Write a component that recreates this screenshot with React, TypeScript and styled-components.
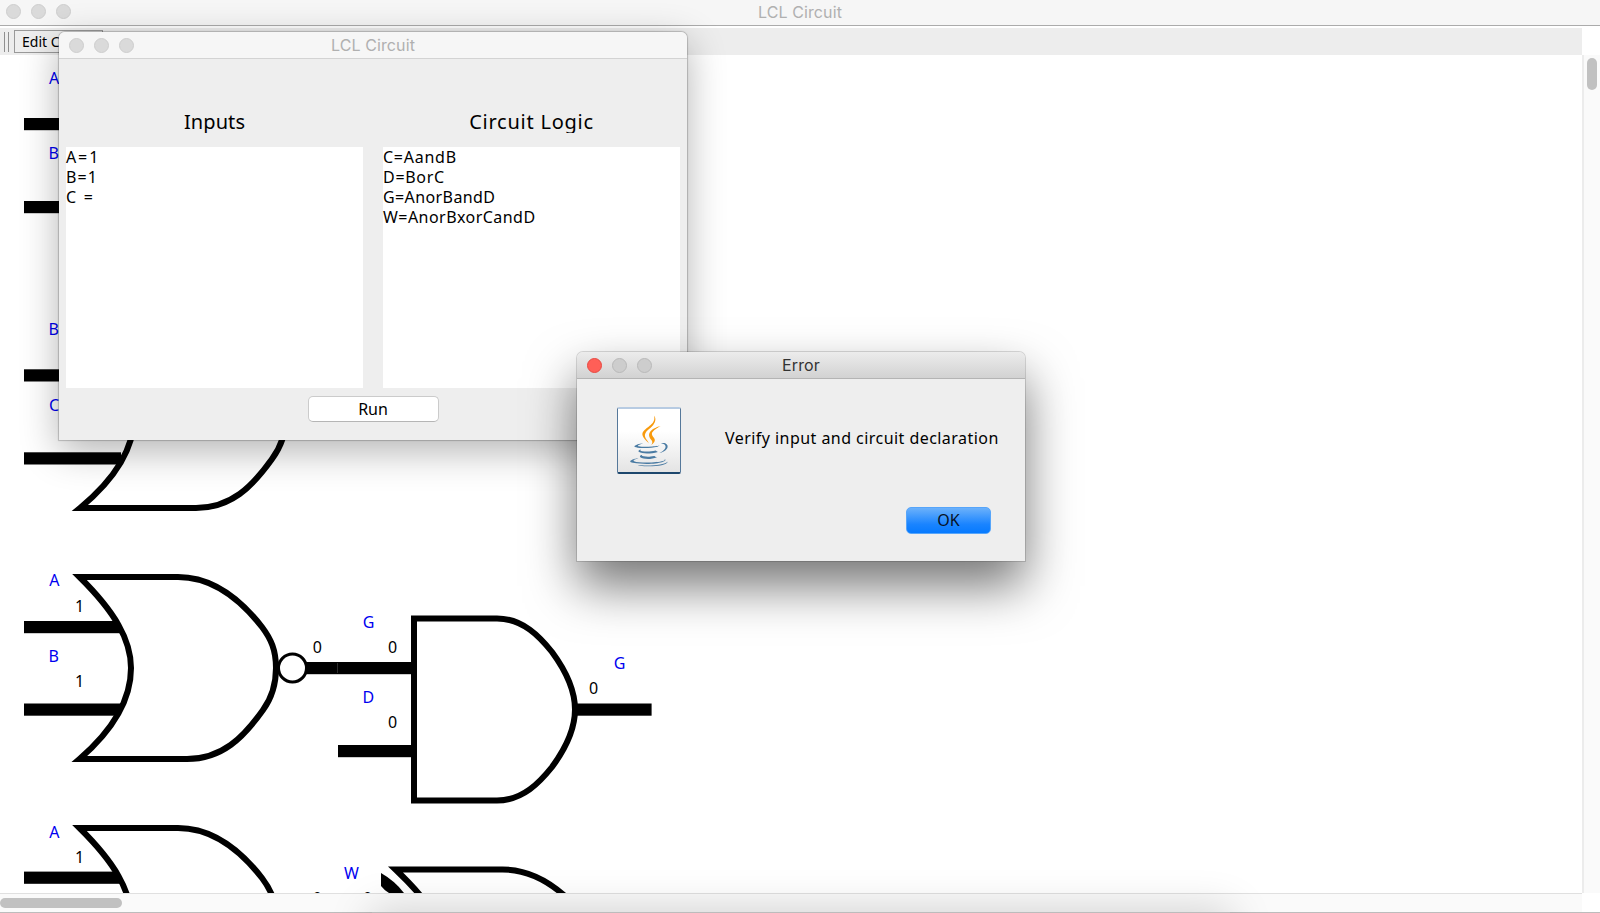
import React from "react";
import styled, { createGlobalStyle } from "styled-components";

const GlobalStyle = createGlobalStyle`
  *, *::before, *::after { box-sizing: border-box; }
  body { margin: 0; background: #fff; overflow: hidden; }
`;

const uiFont = `"Noto Sans", "Open Sans", sans-serif`;
const titleFont = `Inter, Roboto, "Liberation Sans", sans-serif`;

const Desktop = styled.main`
  position: relative;
  display: flex;
  flex-direction: column;
  width: 1600px;
  height: 913px;
  overflow: hidden;
  background: #fff;
  font-family: ${uiFont};
  color: #000;
`;

const TitleBar = styled.header<{ $variant: "main" | "inactive" | "active" }>`
  flex: none;
  display: grid;
  grid-template-columns: 1fr auto 1fr;
  align-items: center;
  height: ${(p) => (p.$variant === "main" ? 26 : 27)}px;
  padding: 0 ${(p) => (p.$variant === "main" ? 6 : 10)}px;
  padding-bottom: ${(p) => (p.$variant === "main" ? 2 : 0)}px;
  background: ${(p) =>
    p.$variant === "active" ? "linear-gradient(#ececec, #d2d2d2)" : "#f6f6f6"};
  border-bottom: ${(p) =>
    p.$variant === "main" ? "1.5px solid #ababab" : p.$variant === "active" ? "1px solid #b4b4b4" : "1px solid #d3d3d3"};
`;

const Title = styled.span<{ $active?: boolean }>`
  font-family: ${titleFont};
  font-size: 16px;
  line-height: 20px;
  letter-spacing: 0.1px;
  white-space: nowrap;
  color: ${(p) => (p.$active ? "#333" : "#b0b0b0")};
`;

const Lights = styled.div`
  display: flex;
  gap: 10px;
`;

const Light = styled.i<{ $tone?: "red" | "dark" }>`
  width: 15px;
  height: 15px;
  border-radius: 50%;
  background: ${(p) => (p.$tone === "red" ? "#ff5f57" : p.$tone === "dark" ? "#cdcdcd" : "#dadada")};
  border: 1px solid ${(p) => (p.$tone === "red" ? "#e74a42" : p.$tone === "dark" ? "#b9b9b9" : "#cecece")};
`;

const Toolbar = styled.nav`
  flex: none;
  display: flex;
  align-items: center;
  width: 1582px;
  height: 27px;
  margin-top: 2px;
  padding-left: 4px;
  background: #ededed;
`;

const Grip = styled.i`
  width: 5px;
  height: 20px;
  margin-right: 5px;
  border: solid #8f8f8f;
  border-width: 0 1px;
`;

const ToolButton = styled.button`
  width: 89px;
  height: 23px;
  padding: 0 0 0 7px;
  text-align: left;
  font: 14px/20px ${uiFont};
  white-space: nowrap;
  background: #eee;
  border: 1px solid #999;
  border-radius: 0;
`;

const Workspace = styled.div`
  flex: none;
  display: flex;
  height: 838px;
`;

const Circuit = styled.svg`
  flex: none;
  display: block;
  width: 1582px;
  height: 838px;
  background: #fff;
`;

const VerticalScroll = styled.div`
  flex: 1;
  padding: 3px 0 0 3px;
  background: #fafafa;
  border-left: 2px solid #ececec;
`;

const HorizontalScroll = styled.div`
  flex: none;
  width: 1582px;
  height: 19px;
  padding-top: 4px;
  background: #fafafa;
  border-top: 1px solid #e0e0e0;
`;

const Thumb = styled.div<{ $vertical?: boolean }>`
  width: ${(p) => (p.$vertical ? 10 : 122)}px;
  height: ${(p) => (p.$vertical ? 32 : 10)}px;
  border-radius: 5px;
  background: #c1c1c1;
`;

const WindowEdge = styled.div`
  flex: none;
  height: 1px;
  background: #bcbcbc;
`;

const DockShadow = styled.div`
  position: absolute;
  left: 372px;
  top: 912px;
  width: 858px;
  height: 40px;
  box-shadow: 0 0 42px 2px rgba(0, 0, 0, 0.17);
`;

const Window = styled.section<{ $active?: boolean }>`
  position: absolute;
  left: ${(p) => (p.$active ? 577 : 59)}px;
  top: ${(p) => (p.$active ? 352 : 32)}px;
  width: ${(p) => (p.$active ? 448 : 628)}px;
  height: ${(p) => (p.$active ? 209 : 408)}px;
  display: flex;
  flex-direction: column;
  background: #eee;
  border-radius: 6px 6px 0 0;
  box-shadow: ${(p) =>
    p.$active
      ? "0 0 0 1px rgba(0,0,0,.14), 0 25px 50px rgba(0,0,0,.54)"
      : "0 0 1px 1px rgba(0,0,0,.2), 0 11px 38px rgba(0,0,0,.3)"};
  & > header { border-radius: 6px 6px 0 0; }
`;

const Columns = styled.div`
  display: grid;
  grid-template-columns: 297px 297px;
  gap: 20px;
  padding: 51px 7px 0;
`;

const Heading = styled.h2<{ $spacing: number }>`
  height: 23px;
  margin: 0 0 14px;
  overflow: hidden;
  text-align: center;
  font-weight: 400;
  font-size: 20px;
  line-height: 24px;
  letter-spacing: ${(p) => p.$spacing}px;
`;

const Editor = styled.div`
  height: 241px;
  background: #fff;
  font-size: 16px;
  line-height: 20px;
  white-space: pre;
`;

const Line = styled.div<{ $spacing: number }>`
  letter-spacing: ${(p) => p.$spacing}px;
`;

const RunButton = styled.button`
  align-self: center;
  width: 131px;
  height: 26px;
  margin-top: 8px;
  padding: 0 0 1px;
  font: 16px/22px ${uiFont};
  background: #fff;
  border: 1px solid #cbcbcb;
  border-bottom-color: #b5b5b5;
  border-radius: 5px;
`;

const Message = styled.div`
  display: flex;
  align-items: flex-start;
  padding: 28px 0 0 40px;
`;

const IconTile = styled.div`
  display: flex;
  align-items: center;
  justify-content: center;
  width: 64px;
  height: 67px;
  margin-right: 44px;
  border: 1px solid #56789a;
  border-top: 2px solid #b7cbe2;
  border-bottom: 2px solid #1d476d;
  border-radius: 2px;
  background: linear-gradient(#fff 35%, #e4e4e4);
`;

const MessageText = styled.p`
  margin: 20px 0 0;
  font-size: 16px;
  line-height: 22px;
  letter-spacing: 0.45px;
  white-space: nowrap;
`;

const OkButton = styled.button`
  align-self: flex-end;
  width: 85px;
  height: 27px;
  margin: 33px 34px 0 0;
  padding: 0;
  font: 16px/23px ${uiFont};
  color: #061226;
  border: 1px solid #56a5fa;
  border-radius: 5px;
  background: linear-gradient(#6bb1fb, #1a84ff 65%, #067aff);
`;

type Label = [text: string, x: number, baseline: number];

const signalNames: Label[] = [
  ["A", 49, 84], ["B", 48.5, 159], ["B", 48.5, 335], ["C", 49, 411],
  ["A", 49.2, 586.4], ["B", 48.5, 661.6], ["G", 362.8, 628], ["D", 362.6, 703],
  ["G", 613.8, 669], ["A", 49.2, 838], ["W", 344, 879],
];

const signalValues: Label[] = [
  ["1", 75, 611.6], ["1", 75, 687.3], ["0", 312.7, 653], ["0", 388, 653],
  ["0", 388, 728.3], ["0", 589, 694.3], ["1", 75, 863], ["0", 312.7, 904],
  ["0", 363, 904],
];

const wires: [x: number, y: number, width: number][] = [
  [24, 118, 100], [24, 201, 100], [24, 369.3, 100], [24, 452.3, 97],
  [24, 621, 97], [24, 703.5, 97], [306, 662, 107],
  [338, 745, 75], [577, 703.5, 74.6], [24, 871.6, 97],
];

const norBody =
  "M79.5 577 H178 C213 577 241 600 262 627 C271 639 276 650 276 668 C276 686 271 699 263 710 C243 738 222 759 187 759 H79.5 C113 730 131 700 131 668 C131 640 115 612 79.5 577 Z";
const orBody =
  "M80 577 H187 C222 577 250 600 271 627 C280 639 286 650 286 668 C286 686 280 699 272 710 C252 738 231 759 196 759 H80 C115 730 134 700 134 668 C134 640 117 612 80 577 Z";

function CircuitDrawing() {
  return (
    <Circuit viewBox="0 55 1582 838">
      {wires.map(([x, y, w]) => (
        <rect key={`${x}-${y}`} x={x} y={y} width={w} height="12.2" />
      ))}
      <rect x="337" y="663" width="1" height="10" fill="#2c2c2c" />
      <g fill="#fff" stroke="#000" strokeWidth="6" strokeMiterlimit="10">
        <path d={orBody} transform="translate(0 -251)" />
        <path d={norBody} />
        <path d={norBody} transform="translate(0 251)" />
        <path d={orBody} transform="translate(315.5 292.5)" />
        <path d="M414 618.5 H497 C523 618.5 540 637 552 652 C566 671 575 689 575 709.5 C575 730 566 748 552 767 C540 782 523 800.5 497 800.5 H414 Z" />
        <circle cx="292.5" cy="668" r="14" strokeWidth="3" />
      </g>
      <path d="M381 873 Q395 881 404 893 H389 Q384 890 381 886 Z" />
      <g fontFamily={uiFont} fontSize="16">
        <g fill="#0000f0">
          {signalNames.map(([t, x, y]) => (
            <text key={`${x}-${y}`} x={x} y={y}>{t}</text>
          ))}
        </g>
        {signalValues.map(([t, x, y]) => (
          <text key={`${x}-${y}`} x={x} y={y}>{t}</text>
        ))}
      </g>
    </Circuit>
  );
}

function JavaCup() {
  return (
    <svg width="52" height="52" viewBox="0 0 128 128">
      <g fill="#4a7ba3">
        <path d="M47.617 98.12s-4.767 2.774 3.397 3.71c9.892 1.13 14.947.968 25.845-1.092 0 0 2.871 1.795 6.873 3.351-24.439 10.47-55.308-.607-36.115-5.969zm-2.988-13.665s-5.348 3.959 2.823 4.805c10.567 1.091 18.91 1.18 33.354-1.6 0 0 1.993 2.025 5.132 3.131-29.542 8.64-62.446.68-41.309-6.336z" />
        <path d="M102.123 108.229s3.529 2.91-3.888 5.159c-14.102 4.272-58.706 5.56-71.094.171-4.451-1.938 3.899-4.625 6.526-5.192 2.739-.593 4.303-.485 4.303-.485-4.953-3.487-32.013 6.85-13.743 9.815 49.821 8.076 90.817-3.637 77.896-9.468zM49.912 70.294s-22.686 5.389-8.033 7.348c6.188.828 18.518.638 30.011-.326 9.39-.789 18.813-2.474 18.813-2.474s-3.308 1.419-5.704 3.053c-23.042 6.061-67.544 3.238-54.731-2.958 10.832-5.239 19.644-4.643 19.644-4.643zm40.697 22.747c23.421-12.167 12.591-23.86 5.032-22.285-1.848.385-2.677.72-2.677.72s.688-1.079 2-1.543c14.953-5.255 26.451 15.503-4.823 23.725 0-.002.359-.327.468-.617z" />
        <path d="M52.214 126.021c22.476 1.437 57-.8 57.817-11.436 0 0-1.571 4.032-18.577 7.231-19.186 3.612-42.854 3.191-56.887.874 0 .001 2.875 2.381 17.647 3.305z" />
      </g>
      <g fill="#f89a0c">
        <path d="M69.802 61.271c6.025 6.935-1.58 13.17-1.58 13.17s15.289-7.891 8.269-17.777c-6.559-9.215-11.587-13.792 15.635-29.58 0 .001-42.731 10.67-22.324 34.187z" />
        <path d="M76.491 1.587S89.459 14.563 64.188 34.51c-20.266 16.006-4.621 25.13-.007 35.559-11.831-10.673-20.509-20.07-14.688-28.815C58.041 28.42 81.722 22.195 76.491 1.587z" />
      </g>
    </svg>
  );
}

export default function App() {
  return (
    <>
      <GlobalStyle />
      <Desktop>
        <TitleBar $variant="main">
          <Lights><Light /><Light /><Light /></Lights>
          <Title>LCL Circuit</Title>
        </TitleBar>
        <Toolbar>
          <Grip />
          <ToolButton>Edit Circuit</ToolButton>
        </Toolbar>
        <Workspace>
          <CircuitDrawing />
          <VerticalScroll><Thumb $vertical /></VerticalScroll>
        </Workspace>
        <HorizontalScroll><Thumb /></HorizontalScroll>
        <WindowEdge />
        <DockShadow />

        <Window>
          <TitleBar $variant="inactive">
            <Lights><Light /><Light /><Light /></Lights>
            <Title>LCL Circuit</Title>
          </TitleBar>
          <Columns>
            <div>
              <Heading $spacing={0.1}>Inputs</Heading>
              <Editor>
                <Line $spacing={1.9}>A=1</Line>
                <Line $spacing={1.1}>B=1</Line>
                <Line $spacing={1.8}>C =</Line>
              </Editor>
            </div>
            <div>
              <Heading $spacing={0.75}>Circuit Logic</Heading>
              <Editor>
                <Line $spacing={0.75}>C=AandB</Line>
                <Line $spacing={0.7}>D=BorC</Line>
                <Line $spacing={0.4}>G=AnorBandD</Line>
                <Line $spacing={0.45}>W=AnorBxorCandD</Line>
              </Editor>
            </div>
          </Columns>
          <RunButton>Run</RunButton>
        </Window>

        <Window $active>
          <TitleBar $variant="active">
            <Lights><Light $tone="red" /><Light $tone="dark" /><Light $tone="dark" /></Lights>
            <Title $active>Error</Title>
          </TitleBar>
          <Message>
            <IconTile><JavaCup /></IconTile>
            <MessageText>Verify input and circuit declaration</MessageText>
          </Message>
          <OkButton>OK</OkButton>
        </Window>
      </Desktop>
    </>
  );
}
